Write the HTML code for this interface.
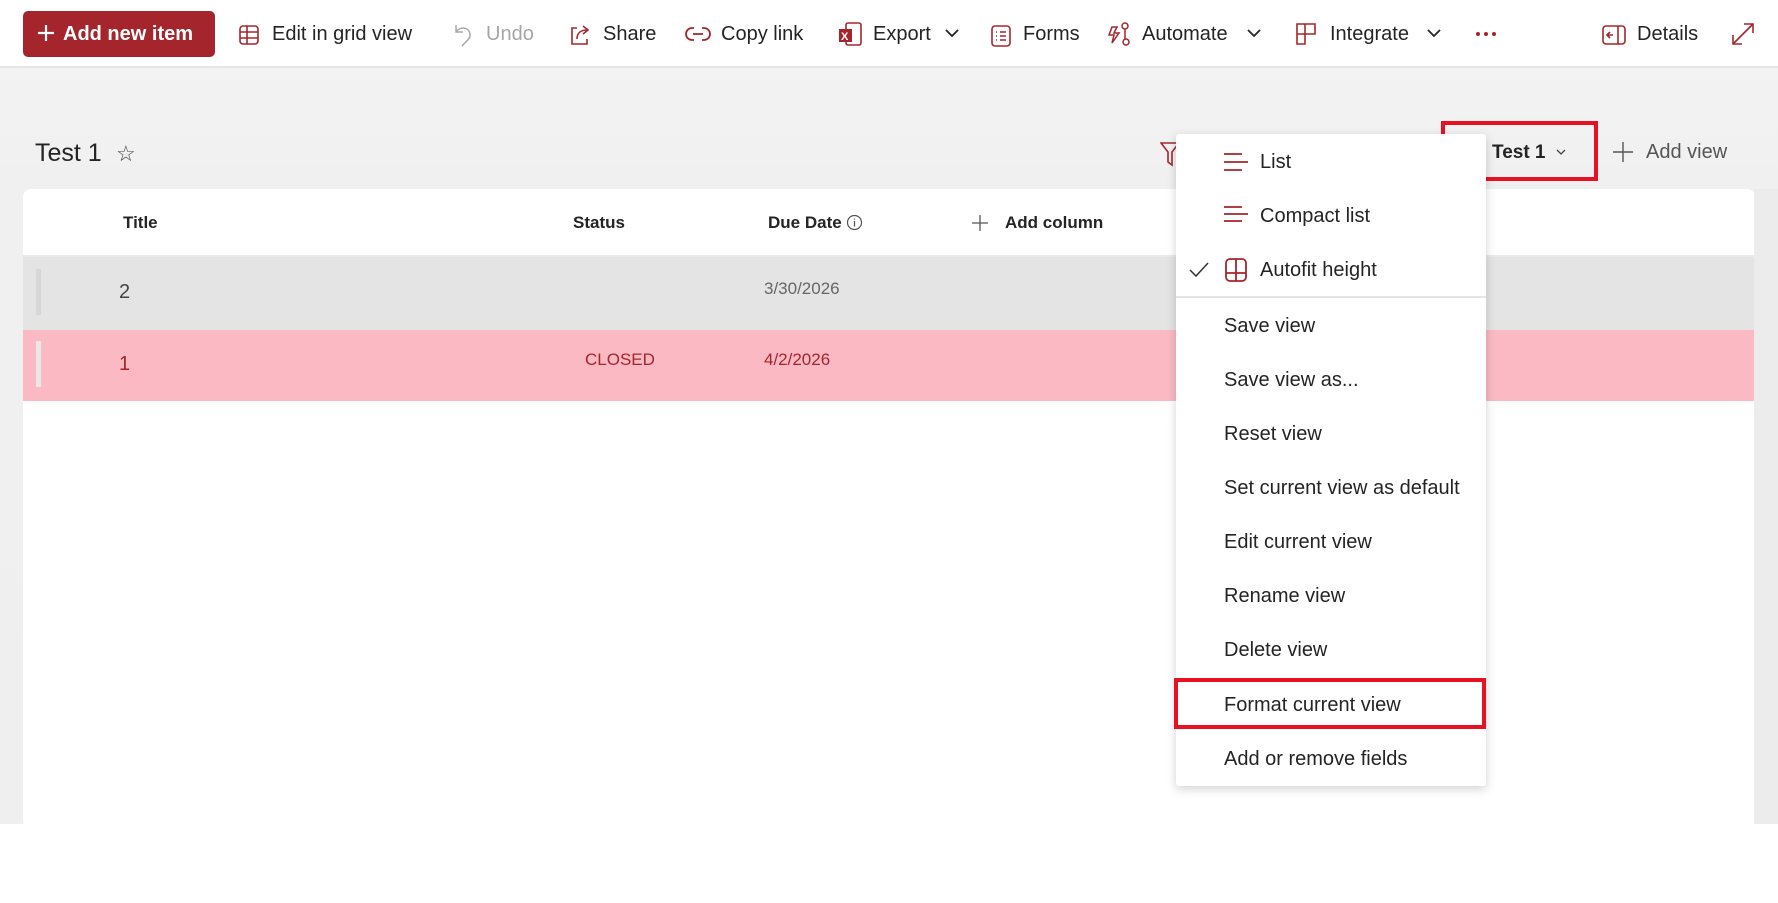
<!DOCTYPE html>
<html><head><meta charset="utf-8"><style>
*{margin:0;padding:0;box-sizing:border-box}
body{width:1778px;height:903px;position:relative;overflow:hidden;background:#fff;font-family:"Liberation Sans",sans-serif;color:#242424}
.a{position:absolute;white-space:nowrap}
.tb{font-size:20px;top:23px;color:#242424}
.ic{position:absolute}
.mi{position:absolute;left:1224px;font-size:20px;color:#242424}
</style></head><body>
<div class="a" style="left:0;top:0;width:1778px;height:68px;background:#fff;border-bottom:2px solid #e6e6e6"></div>
<div class="a" style="left:0;top:68px;width:1778px;height:756px;background:linear-gradient(#f3f3f3,#f0f0f0 120px,#efefef)"></div>
<!-- toolbar -->
<div class="a" style="left:23px;top:11px;width:192px;height:46px;background:#a4262c;border-radius:5px;color:#fff;font-size:20px;font-weight:bold;line-height:46px;padding-left:14px">
<svg width="18" height="18" style="vertical-align:-2px;margin-right:8px"><path d="M9 1v16M1 9h16" stroke="#fff" stroke-width="2.2"/></svg>Add new item</div>
<svg class="ic" style="left:238px;top:24px" width="22" height="22"><rect x="2" y="2" width="18" height="18" rx="3" fill="none" stroke="#a4262c" stroke-width="1.6"/><path d="M2 8h18M2 14h18M9 2v18" stroke="#a4262c" stroke-width="1.6"/></svg>
<div class="a tb" style="left:272px">Edit in grid view</div>
<svg class="ic" style="left:452px;top:22px" width="22" height="26"><path d="M4 3v7h7M4 10c4-6 13-5 14 2c1 5-5 8-8 12" fill="none" stroke="#a8a8a8" stroke-width="1.5"/></svg>
<div class="a tb" style="left:486px;color:#a6a6a6">Undo</div>
<svg class="ic" style="left:568px;top:23px" width="24" height="24"><path d="M9 5H4v16h15v-5" fill="none" stroke="#a4262c" stroke-width="1.6"/><path d="M9 16c0-6 4-9 10-9M15 3l5 4-5 4" fill="none" stroke="#a4262c" stroke-width="1.6"/></svg>
<div class="a tb" style="left:603px">Share</div>
<svg class="ic" style="left:685px;top:26px" width="26" height="16"><path d="M9 2H7a6 6 0 000 12h2M17 2h2a6 6 0 010 12h-2M8 8h10" fill="none" stroke="#a4262c" stroke-width="1.8"/></svg>
<div class="a tb" style="left:721px">Copy link</div>
<svg class="ic" style="left:837px;top:21px" width="26" height="26"><rect x="9" y="2" width="15" height="22" rx="2" fill="none" stroke="#a4262c" stroke-width="1.6"/><rect x="2" y="8" width="13" height="13" fill="#a4262c"/><text x="4" y="19" font-size="11" fill="#fff" font-weight="bold">X</text></svg>
<div class="a tb" style="left:873px">Export</div>
<svg class="ic" style="left:945px;top:29px" width="14" height="10"><path d="M1 1l6 6 6-6" fill="none" stroke="#242424" stroke-width="1.8"/></svg>
<svg class="ic" style="left:990px;top:25px" width="22" height="22"><rect x="2" y="1" width="18" height="20" rx="3" fill="none" stroke="#a4262c" stroke-width="1.6"/><path d="M6 7h1M10 7h6M6 11h1M10 11h6M6 15h1M10 15h6" stroke="#a4262c" stroke-width="1.6"/></svg>
<div class="a tb" style="left:1023px">Forms</div>
<svg class="ic" style="left:1106px;top:21px" width="26" height="26"><path d="M6 6l-3 8h5l-2 8 7-10H8l3-6z" fill="none" stroke="#a4262c" stroke-width="1.5"/><circle cx="19" cy="5" r="3" fill="none" stroke="#a4262c" stroke-width="1.5"/><circle cx="20" cy="21" r="3" fill="none" stroke="#a4262c" stroke-width="1.5"/><path d="M19 8v10" stroke="#a4262c" stroke-width="1.5"/></svg>
<div class="a tb" style="left:1142px">Automate</div>
<svg class="ic" style="left:1247px;top:29px" width="14" height="10"><path d="M1 1l6 6 6-6" fill="none" stroke="#242424" stroke-width="1.8"/></svg>
<svg class="ic" style="left:1295px;top:21px" width="22" height="26"><path d="M2 3h18v10H10v10H2z M10 3v10M2 13h8" fill="none" stroke="#a4262c" stroke-width="1.6"/></svg>
<div class="a tb" style="left:1330px">Integrate</div>
<svg class="ic" style="left:1427px;top:29px" width="14" height="10"><path d="M1 1l6 6 6-6" fill="none" stroke="#242424" stroke-width="1.8"/></svg>
<svg class="ic" style="left:1475px;top:31px" width="22" height="6"><circle cx="3" cy="3" r="2" fill="#a4262c"/><circle cx="11" cy="3" r="2" fill="#a4262c"/><circle cx="19" cy="3" r="2" fill="#a4262c"/></svg>
<svg class="ic" style="left:1601px;top:24px" width="26" height="22"><rect x="2" y="2" width="22" height="18" rx="3" fill="none" stroke="#a4262c" stroke-width="1.6"/><path d="M17 2v18M12 11H6M9 8l-3 3 3 3" fill="none" stroke="#a4262c" stroke-width="1.6"/></svg>
<div class="a tb" style="left:1637px">Details</div>
<svg class="ic" style="left:1731px;top:22px" width="24" height="24"><path d="M2 22L22 2M13 2h9v9M2 13v9h9" fill="none" stroke="#a4262c" stroke-width="1.6"/></svg>
<!-- title -->
<div class="a" style="left:35px;top:139px;font-size:25px;color:#242424">Test 1</div>
<div class="a" style="left:116px;top:141px;font-size:22px;color:#444">☆</div>
<!-- card -->
<div class="a" style="left:23px;top:189px;width:1732px;height:640px;background:#fff;border-radius:8px"></div>
<div class="a" style="left:23px;top:255px;width:1732px;height:2px;background:#eaeaea"></div>
<div class="a" style="left:123px;top:213px;font-size:17px;font-weight:bold">Title</div>
<div class="a" style="left:573px;top:213px;font-size:17px;font-weight:bold">Status</div>
<div class="a" style="left:768px;top:213px;font-size:17px;font-weight:bold">Due Date <svg width="17" height="17" style="vertical-align:-3px"><circle cx="8.5" cy="8.5" r="7" fill="none" stroke="#555" stroke-width="1.2"/><path d="M8.5 7v5.5M8.5 4.5v1" stroke="#555" stroke-width="1.3"/></svg></div>
<svg class="ic" style="left:972px;top:215px" width="16" height="16"><path d="M8 0v16M0 8h16" stroke="#555" stroke-width="1.3"/></svg>
<div class="a" style="left:1005px;top:213px;font-size:17px;font-weight:bold">Add column</div>
<div class="a" style="left:23px;top:257px;width:1732px;height:73px;background:#e4e4e4"></div>
<div class="a" style="left:36px;top:269px;width:5px;height:46px;background:#d7d7d7"></div>
<div class="a" style="left:119px;top:281px;font-size:20px;color:#444">2</div>
<div class="a" style="left:764px;top:279px;font-size:17px;color:#666">3/30/2026</div>
<div class="a" style="left:23px;top:330px;width:1732px;height:71px;background:#fbbac3"></div>
<div class="a" style="left:36px;top:341px;width:5px;height:46px;background:#e9e9e9"></div>
<div class="a" style="left:119px;top:353px;font-size:20px;color:#a4262c">1</div>
<div class="a" style="left:585px;top:350px;font-size:17px;color:#a4262c">CLOSED</div>
<div class="a" style="left:764px;top:350px;font-size:17px;color:#a4262c">4/2/2026</div>
<!-- filter icon peek -->
<svg class="ic" style="left:1160px;top:142px" width="20" height="26"><path d="M1 1h18l-7 9v13l-4-3V10z" fill="none" stroke="#a4262c" stroke-width="1.6"/></svg>
<!-- view selector -->
<div class="a" style="left:1441px;top:121px;width:157px;height:60px;border:4px solid #e81123"></div>
<div class="a" style="left:1492px;top:142px;font-size:19px;font-weight:bold">Test 1</div>
<svg class="ic" style="left:1556px;top:149px" width="10" height="7"><path d="M1 1l4 4 4-4" fill="none" stroke="#444" stroke-width="1.3"/></svg>
<svg class="ic" style="left:1613px;top:142px" width="20" height="20"><path d="M10 0v20M0 10h20" stroke="#555" stroke-width="1.4"/></svg>
<div class="a" style="left:1646px;top:141px;font-size:20px;color:#555">Add view</div>
<div class="a" style="left:1754px;top:189px;width:24px;height:635px;background:#ececec"></div>
<!-- menu -->
<div class="a" style="left:1176px;top:134px;width:310px;height:652px;background:#fff;box-shadow:0 3px 10px rgba(0,0,0,.18);border-radius:3px"></div>
<svg class="ic" style="left:1224px;top:152px" width="24" height="20"><path d="M0 2h18M0 10h24M0 18h18" stroke="#a4262c" stroke-width="1.8"/></svg>
<div class="mi" style="left:1260px;top:151px">List</div>
<svg class="ic" style="left:1224px;top:206px" width="24" height="18"><path d="M0 1h18M0 8h24M0 15h18" stroke="#a4262c" stroke-width="1.8"/></svg>
<div class="mi" style="left:1260px;top:205px">Compact list</div>
<svg class="ic" style="left:1189px;top:262px" width="20" height="16"><path d="M1 8l6 6L19 1" fill="none" stroke="#333" stroke-width="1.5"/></svg>
<svg class="ic" style="left:1225px;top:258px" width="22" height="24"><rect x="1" y="1" width="20" height="22" rx="4" fill="none" stroke="#a4262c" stroke-width="1.8"/><path d="M11 1v22M1 15h20" stroke="#a4262c" stroke-width="1.8"/></svg>
<div class="mi" style="left:1260px;top:259px">Autofit height</div>
<div class="a" style="left:1176px;top:296px;width:310px;height:2px;background:#e6e6e6"></div>
<div class="mi" style="top:315px">Save view</div>
<div class="mi" style="top:369px">Save view as...</div>
<div class="mi" style="top:423px">Reset view</div>
<div class="mi" style="top:477px">Set current view as default</div>
<div class="mi" style="top:531px">Edit current view</div>
<div class="mi" style="top:585px">Rename view</div>
<div class="mi" style="top:639px">Delete view</div>
<div class="a" style="left:1174px;top:678px;width:312px;height:51px;border:4px solid #e81123"></div>
<div class="mi" style="top:694px">Format current view</div>
<div class="mi" style="top:748px">Add or remove fields</div>
</body></html>
